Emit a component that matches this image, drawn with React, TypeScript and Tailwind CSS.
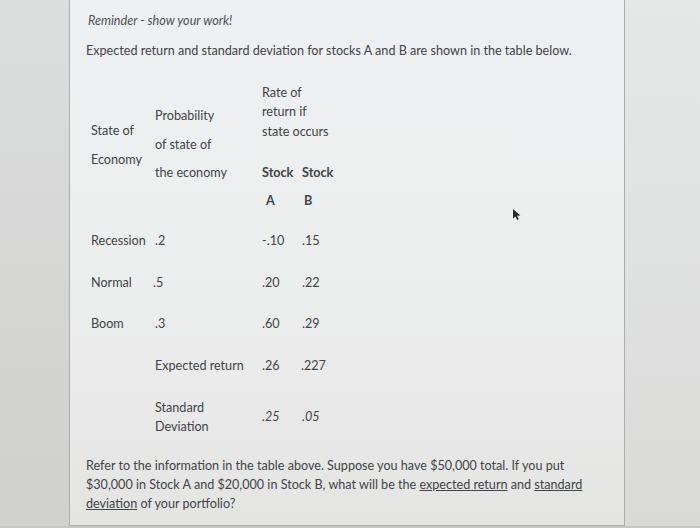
import React from "react";

export default function App() {
  const font = { fontFamily: "Lato, 'Noto Sans', sans-serif" };
  return (
    <div
      className="relative w-[700px] h-[528px] overflow-hidden flex flex-col bg-[#c9c9c7] text-[12.6px] text-[#424448]"
      style={font}
    >
      <div className="flex h-[526px]">
        <div className="w-[69px] bg-gradient-to-b from-[#dcdedd] to-[#d0d0ce]" />
        <main className="w-[556px] border-x border-b border-[#a9adb0] bg-gradient-to-b from-[#eff0f1] via-[#edeeee] to-[#e4e5e3] pl-[18px] pt-[11px]">
          <p className="italic leading-[19.5px] text-[#4e5055]">Reminder - show your work!</p>
          <p className="mt-[10px] -ml-[2px] leading-[19.5px]">
            Expected return and standard deviation for stocks A and B are shown in the table below.
          </p>

          <div className="mt-[9px] ml-[3px] grid grid-cols-[64px_107px_40px_60px]">
            {/* header */}
            <div className="h-[152px] flex flex-col justify-center leading-[29px]">
              <span>State of</span>
              <span>Economy</span>
            </div>
            <div className="h-[152px] flex flex-col justify-center leading-[28.5px]">
              <span>Probability</span>
              <span>of state of</span>
              <span>the economy</span>
            </div>
            <div className="col-span-2 h-[152px] flex flex-col justify-center pt-[7px]">
              <div className="leading-[19.5px] flex flex-col">
                <span>Rate of</span>
                <span>return if</span>
                <span>state occurs</span>
              </div>
              <div className="mt-[17.5px] grid grid-cols-[40px_60px] font-bold leading-[28px]">
                <span>Stock</span>
                <span>Stock</span>
                <span className="pl-[4px]">A</span>
                <span className="pl-[2px]">B</span>
              </div>
            </div>

            {/* rows */}
            <div className="h-[41.5px] flex items-center">Recession</div>
            <div className="h-[41.5px] flex items-center">.2</div>
            <div className="h-[41.5px] flex items-center">-.10</div>
            <div className="h-[41.5px] flex items-center">.15</div>

            <div className="h-[41.5px] flex items-center">Normal</div>
            <div className="h-[41.5px] flex items-center -ml-[2px]">.5</div>
            <div className="h-[41.5px] flex items-center">.20</div>
            <div className="h-[41.5px] flex items-center">.22</div>

            <div className="h-[41.5px] flex items-center">Boom</div>
            <div className="h-[41.5px] flex items-center">.3</div>
            <div className="h-[41.5px] flex items-center">.60</div>
            <div className="h-[41.5px] flex items-center">.29</div>

            <div className="h-[41.5px]" />
            <div className="h-[41.5px] flex items-center whitespace-nowrap">Expected return</div>
            <div className="h-[41.5px] flex items-center">.26</div>
            <div className="h-[41.5px] flex items-center -ml-[1px]">.227</div>

            <div className="h-[60.5px]" />
            <div className="h-[60.5px] flex flex-col justify-center leading-[19.5px]">
              <span>Standard</span>
              <span>Deviation</span>
            </div>
            <div className="h-[60.5px] flex items-center italic">.25</div>
            <div className="h-[60.5px] flex items-center italic">.05</div>
          </div>

          <p className="mt-[8.5px] -ml-[2px] leading-[19px] whitespace-nowrap">
            Refer to the information in the table above. Suppose you have $50,000 total. If you put
            <br />
            $30,000 in Stock A and $20,000 in Stock B, what will be the{" "}
            <span className="underline">expected return</span> and{" "}
            <span className="underline">standard</span>
            <br />
            <span className="underline">deviation</span> of your portfolio?
          </p>
        </main>
        <div className="flex-1 bg-gradient-to-b from-[#e6e8e8] to-[#d9dad8]" />
      </div>
      <div className="flex-1 bg-[#c6c6c4]" />

      <svg
        className="absolute left-[512px] top-[208px]"
        width="10"
        height="13"
        viewBox="0 0 10 13"
      >
        <path d="M1 1 L1 10.5 L3.4 8.4 L5.2 12 L6.8 11.2 L5 7.7 L8.4 7.6 Z" fill="#2a2a2a" />
      </svg>
    </div>
  );
}
